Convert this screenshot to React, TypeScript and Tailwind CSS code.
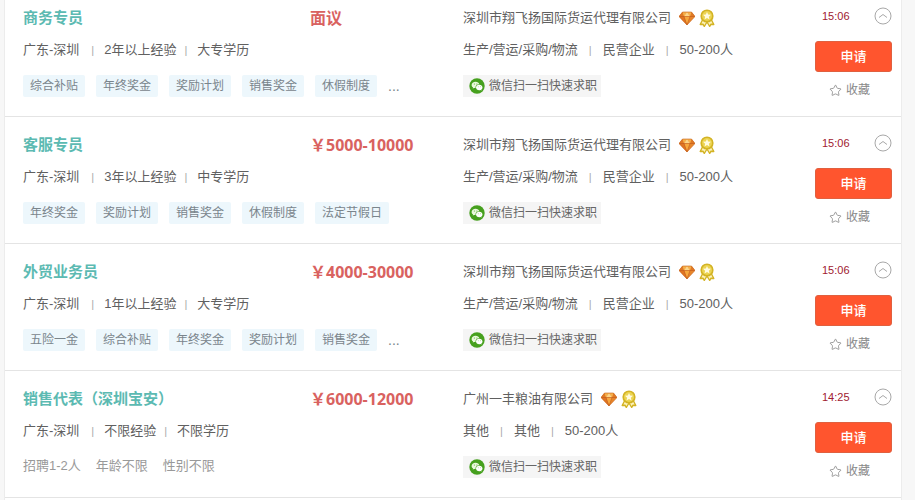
import { Star } from 'lucide-react'

type Job = {
  id: number
  title: string
  salary: string
  location: string
  experience: string
  education: string
  tags?: string[]
  more?: boolean
  notes?: string[]
  company: string
  companyInfo: string[]
  time: string
}

const jobs: Job[] = [
  {
    id: 1,
    title: '商务专员',
    salary: '面议',
    location: '广东-深圳',
    experience: '2年以上经验',
    education: '大专学历',
    tags: ['综合补贴', '年终奖金', '奖励计划', '销售奖金', '休假制度'],
    more: true,
    company: '深圳市翔飞扬国际货运代理有限公司',
    companyInfo: ['生产/营运/采购/物流', '民营企业', '50-200人'],
    time: '15:06'
  },
  {
    id: 2,
    title: '客服专员',
    salary: '￥5000-10000',
    location: '广东-深圳',
    experience: '3年以上经验',
    education: '中专学历',
    tags: ['年终奖金', '奖励计划', '销售奖金', '休假制度', '法定节假日'],
    company: '深圳市翔飞扬国际货运代理有限公司',
    companyInfo: ['生产/营运/采购/物流', '民营企业', '50-200人'],
    time: '15:06'
  },
  {
    id: 3,
    title: '外贸业务员',
    salary: '￥4000-30000',
    location: '广东-深圳',
    experience: '1年以上经验',
    education: '大专学历',
    tags: ['五险一金', '综合补贴', '年终奖金', '奖励计划', '销售奖金'],
    more: true,
    company: '深圳市翔飞扬国际货运代理有限公司',
    companyInfo: ['生产/营运/采购/物流', '民营企业', '50-200人'],
    time: '15:06'
  },
  {
    id: 4,
    title: '销售代表（深圳宝安）',
    salary: '￥6000-12000',
    location: '广东-深圳',
    experience: '不限经验',
    education: '不限学历',
    notes: ['招聘1-2人', '年龄不限', '性别不限'],
    company: '广州一丰粮油有限公司',
    companyInfo: ['其他', '其他', '50-200人'],
    time: '14:25'
  }
]

const DiamondIcon = () => (
  <svg viewBox="0 0 16 16" className="h-4 w-4 shrink-0">
    <path d="M3.5 2h9L16 6.5 8 15 0 6.5z" fill="#e8862a" />
    <path d="M3.5 2 5 6.5H0zM12.5 2 11 6.5h5z" fill="#e07a26" />
    <path d="M3.5 2H8L5 6.5zM12.5 2H8l3 4.5z" fill="#f6b04a" />
    <path d="M8 2 5 6.5h6z" fill="#fbd68a" />
    <path d="M5 6.5h6L8 15z" fill="#f7a83e" />
    <path d="M0 6.5h5L8 15z" fill="#e07524" />
    <path d="M0 6.5h16M5 6.5 8 15l3-8.5" fill="none" stroke="#b8501a" strokeWidth="0.5" />
    <path d="M3.5 2h9L16 6.5 8 15 0 6.5z" fill="none" stroke="#c8641f" strokeWidth="0.6" />
  </svg>
)

const MedalIcon = () => (
  <svg viewBox="0 0 16 18" className="h-[18px] w-4 shrink-0">
    <path d="M4 10 1.2 15.5l2.8-.3 1.3 2.3L8 13l2.7 4.5 1.3-2.3 2.8.3L12 10z" fill="#fdf3bd" stroke="#d3b324" strokeWidth="1.4" strokeLinejoin="round" />
    <circle cx="8" cy="7" r="5.8" fill="#ecd452" stroke="#d3b324" strokeWidth="1.6" />
    <path d="m8 2.9 1.2 2.6 2.8.3-2.1 1.9.6 2.8L8 9.1l-2.5 1.4.6-2.8L4 5.8l2.8-.3z" fill="#fffbe0" />
  </svg>
)

const WechatIcon = () => (
  <svg viewBox="0 0 16 16" className="h-4 w-4 shrink-0">
    <circle cx="8" cy="8" r="7.7" fill="#46a01e" />
    <path d="M6.6 3.7c-2.3 0-4 1.4-4 3.2 0 1 .6 1.9 1.5 2.5l-.4 1.2 1.5-.7c.4.1.8.2 1.3.2-.3-2.4 1.5-3.9 3.9-3.9-.4-1.5-1.9-2.5-3.8-2.5z" fill="#e9f8dc" />
    <path d="M10.3 6.8c-1.9 0-3.3 1.2-3.3 2.7s1.4 2.7 3.3 2.7c.4 0 .8-.1 1.1-.2l1.2.6-.3-1c.8-.5 1.2-1.3 1.2-2.1 0-1.5-1.4-2.7-3.2-2.7z" fill="#fff" />
    <g fill="#46a01e">
      <circle cx="5.3" cy="5.9" r="0.5" />
      <circle cx="7.9" cy="5.9" r="0.5" />
      <circle cx="9.2" cy="8.8" r="0.4" />
      <circle cx="11.4" cy="8.8" r="0.4" />
    </g>
  </svg>
)

const CollapseIcon = () => (
  <svg viewBox="0 0 18 18" className="h-[18px] w-[18px]" fill="none" stroke="#a8a8a8">
    <circle cx="9" cy="9" r="8" />
    <path d="M5 10.5 9 7.5l4 3" />
  </svg>
)

const Divider = () => <span className="text-[11px] text-[#aaa]">|</span>

function JobRow({ job }: { job: Job }) {
  return (
    <li className="flex border-b border-[#e4e4e4] pt-4 pr-[9px] pb-4 pl-[18px] first:pt-1.5">
      <div className="w-[440px] shrink-0">
        <div className="flex h-6 items-center">
          <h2 className="w-[287px] text-[15px] font-bold">
            <a href="#" className="text-[#5cbab2]">{job.title}</a>
          </h2>
          <p className="font-['Open_Sans','Noto_Sans_CJK_SC',sans-serif] text-base leading-6 font-bold text-[#d9625f]">
            {job.salary}
          </p>
        </div>
        <div className="mt-[10px] flex h-5 items-center text-[13px] text-[#606060]">
          <span className="mr-3">{job.location}</span>
          <Divider />
          <span className="mr-2 ml-[10px]">{job.experience}</span>
          <Divider />
          <span className="ml-[10px]">{job.education}</span>
        </div>
        {job.tags && (
          <ul className="mt-[15px] flex gap-[11px] text-xs text-[#7a858c]">
            {job.tags.map((tag) => (
              <li key={tag} className="h-[22px] rounded-xs bg-[#edf7fc] px-[7px] leading-[22px]">{tag}</li>
            ))}
            {job.more && <li className="text-sm leading-[22px]">...</li>}
          </ul>
        )}
        {job.notes && (
          <p className="mt-[15px] flex gap-[15px] text-[13px] leading-5 text-[#999]">
            {job.notes.map((note) => (
              <span key={note}>{note}</span>
            ))}
          </p>
        )}
      </div>

      <div className="min-w-0 flex-1">
        <div className="flex h-6 items-center gap-1">
          <a href="#" className="mr-1 text-[13px] text-[#606060]">{job.company}</a>
          <DiamondIcon />
          <MedalIcon />
        </div>
        <div className="mt-[10px] flex h-5 items-center gap-[11px] text-[13px] text-[#606060]">
          {job.companyInfo.map((info, index) => (
            <span key={index} className="flex items-center gap-[11px]">
              {index > 0 && <Divider />}
              {info}
            </span>
          ))}
        </div>
        <button className="mt-[15px] flex h-[22px] items-center gap-1 bg-[#f5f5f5] pr-1 pl-1.5 text-xs text-[#666]">
          <WechatIcon />
          微信扫一扫快速求职
        </button>
      </div>

      <div className="flex w-[77px] shrink-0 flex-col">
        <div className="flex h-5 items-center justify-between pl-[7px]">
          <time className="text-[11px] text-[#a02030]">{job.time}</time>
          <button aria-label="收起">
            <CollapseIcon />
          </button>
        </div>
        <button className="mt-[15px] mb-2 h-[31px] rounded-[3px] border border-[#e0603f] bg-[#ff552e] text-[13px] font-medium text-white">
          申请
        </button>
        <button className="flex h-5 items-center gap-1 pl-[14px] text-xs text-[#888]">
          <Star className="h-[13px] w-[13px]" strokeWidth={1.5} />
          收藏
        </button>
      </div>
    </li>
  )
}

export default function App() {
  return (
    <div className="min-h-screen bg-[#f7f7f7] pr-[13px] pl-1 font-['Liberation_Sans','Noto_Sans_CJK_SC',sans-serif]">
      <ul className="min-h-screen border-x border-[#ececec] bg-white">
        {jobs.map((job) => (
          <JobRow key={job.id} job={job} />
        ))}
      </ul>
    </div>
  )
}
